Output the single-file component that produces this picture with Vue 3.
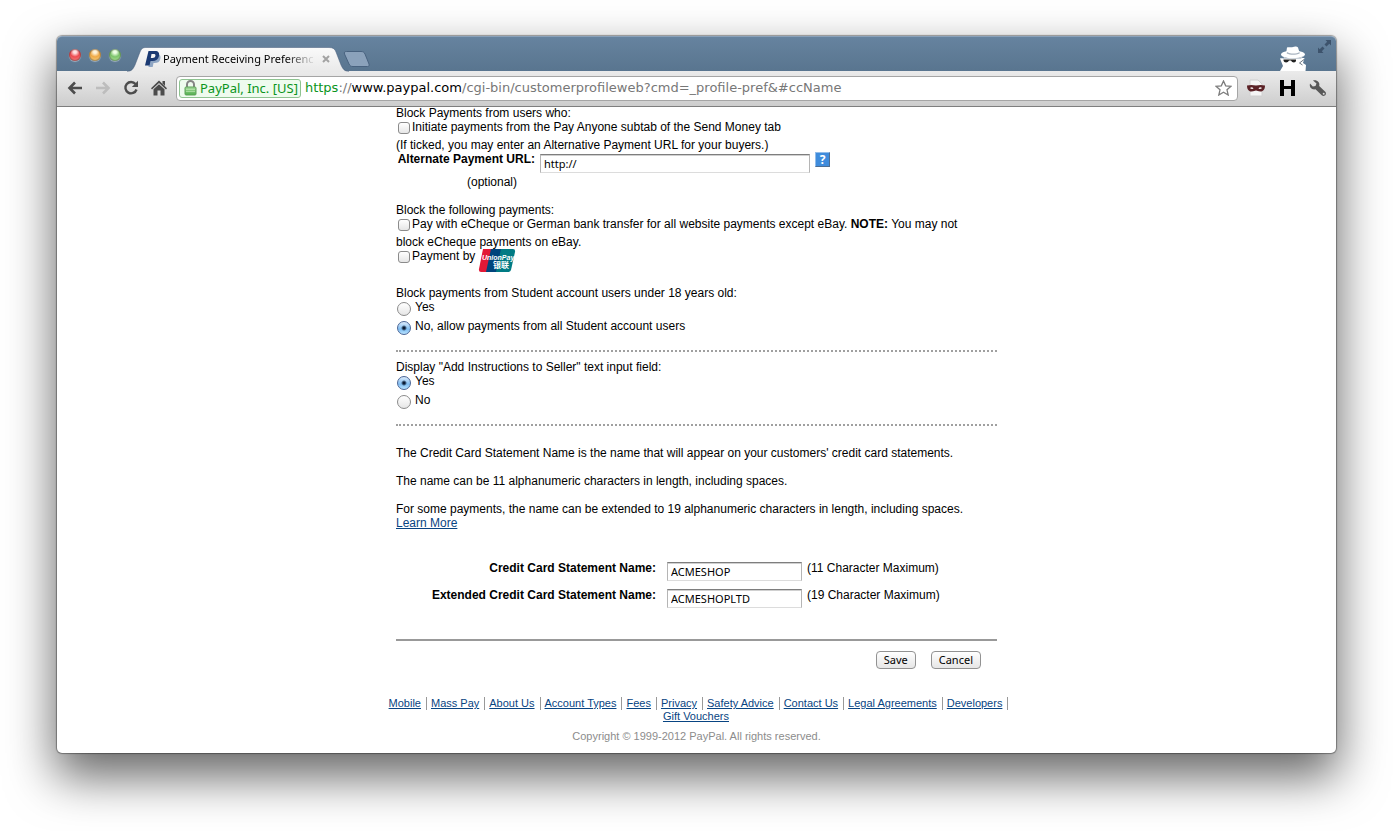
<template>
  <div class="desktop">
    <div class="window">
      <header class="titlebar">
        <div class="lights">
          <button class="light red" aria-label="Close window"></button>
          <button class="light amber" aria-label="Minimise window"></button>
          <button class="light green" aria-label="Zoom window"></button>
        </div>

        <div class="tab">
          <svg class="tab-shape" width="222" height="25" viewBox="0 0 222 25" aria-hidden="true">
            <defs>
              <linearGradient id="tabFill" x1="0" y1="0" x2="0" y2="1">
                <stop offset="0" stop-color="#fafafa" />
                <stop offset="1" stop-color="#e9e9e9" />
              </linearGradient>
            </defs>
            <path d="M0 25C5 24 6 22 8 18L13 5C14.500 1.500 16 .5 19 .5H202C206 .5 208 2 209 5L214 18C216 22 217 24 222 25Z" fill="url(#tabFill)" />
            <path d="M0 24.500C5 24 6 22 8 18L13 5C14.500 1.500 16 .5 19 .5H202C206 .5 208 2 209 5L214 18C216 22 217 24 222 24.500" fill="none" stroke="#43597a" stroke-opacity=".5" />
          </svg>
          <svg class="favicon" width="16" height="16" viewBox="0 0 16 16" aria-hidden="true">
            <path d="M5 3H12C15 3 16 5.500 15.300 8C14.600 11 12.500 12 9.500 12H8.500L7.700 16H3.500Z" fill="#8fa6c4" />
            <path d="M3.500 0H10C13.500 0 14.700 2 14 5C13.300 8.500 11 10 7.500 10H5.500L4.500 14.500H0Z" fill="#1b3a73" />
            <path d="M6.500 3L5.800 7H7.500C9.300 7 10.100 6.200 10.400 4.800C10.700 3.500 10 3 8.500 3Z" fill="#f4f4f4" />
          </svg>
          <span class="tab-title">Payment Receiving Preferenc</span>
          <button class="tab-close" aria-label="Close tab">
            <svg width="8" height="8" viewBox="0 0 8 8"><path d="M1 1L7 7M7 1L1 7" stroke="#a3a3a3" stroke-width="2" /></svg>
          </button>
        </div>

        <button class="new-tab" aria-label="New tab">
          <svg width="28" height="17" viewBox="0 0 28 17">
            <path d="M3.500 .5H18C20 .5 21 1 22 3L26 13C26.500 14.500 26 15.500 24.500 15.500H10C8 15.500 7 15 6 13L1.500 3C1 1.500 1.500 .5 3.500 .5Z" fill="#8ba2bb" stroke="#48627f" />
          </svg>
        </button>

        <svg class="incognito" width="28" height="25" viewBox="0 0 28 25" aria-hidden="true">
          <path d="M1 25L4 20L1 12.500C3 12 5 13 7 12H20L25.500 12L24 17L27 19L26.500 25Z" fill="#fff" />
          <ellipse cx="14" cy="8.500" rx="12" ry="4" fill="#fff" />
          <path d="M7 8L8 1.500C10 .5 12 2 14 1C16 0 18 .5 19 1.500L21 8Z" fill="#fff" />
          <path d="M8 6C12 8 17 8 20.500 6L20.700 7.500C17 9.300 11 9.300 7.700 7.500Z" fill="#a9b4c0" />
          <path d="M4 10.500C9 13 20 13 25 9.500L22 13H6Z" fill="#c9d0d8" />
          <path d="M4.500 13.500H17V14.500C17 17 13 17 12 14.500H10C9 17 5 17 4.500 14.500Z" fill="#222" />
          <path d="M25 13.500L20.500 17L23.500 19" fill="none" stroke="#6a747f" />
        </svg>
        <button class="fullscreen" aria-label="Full screen">
          <svg width="15" height="15" viewBox="0 0 15 15" fill="#3d536c">
            <path d="M8.500 1H14V6.500L12.300 4.800L9.500 7.500L7.500 5.500L10.200 2.700Z" />
            <path d="M6.500 14H1V8.500L2.700 10.200L5.500 7.500L7.500 9.500L4.800 12.300Z" />
          </svg>
        </button>
      </header>

      <nav class="toolbar" aria-label="Browser">
        <button class="tool" aria-label="Back">
          <svg width="16" height="16" viewBox="0 0 16 16"><path d="M15 8H3M8 2.500L2.500 8L8 13.500" fill="none" stroke="#4c4c4c" stroke-width="2.600" /></svg>
        </button>
        <button class="tool" aria-label="Forward" disabled>
          <svg width="16" height="16" viewBox="0 0 16 16"><path d="M1 8H13M8 2.500L13.500 8L8 13.500" fill="none" stroke="#bdbdbd" stroke-width="2.600" /></svg>
        </button>
        <button class="tool" aria-label="Reload">
          <svg width="16" height="16" viewBox="0 0 16 16">
            <path d="M12.500 4A5.700 5.700 0 1 0 13.500 9.500" fill="none" stroke="#4c4c4c" stroke-width="2.400" />
            <path d="M15 .8V7H8.800Z" fill="#4c4c4c" />
          </svg>
        </button>
        <button class="tool" aria-label="Home">
          <svg width="16" height="16" viewBox="0 0 16 16" fill="#4c4c4c">
            <path d="M8 .5L16 8.300L15 9.500L8 3L1 9.500L0 8.300Z" />
            <path d="M11.500 1H14V6L11.500 3.500Z" />
            <path d="M8 4.200L13.500 9.300V15.500H9.500V10.500H6.500V15.500H2.500V9.300Z" />
          </svg>
        </button>

        <div class="omnibox">
          <button class="identity">
            <svg width="13" height="16" viewBox="0 0 13 16" aria-hidden="true">
              <defs>
                <linearGradient id="lockFill" x1="0" y1="0" x2="0" y2="1">
                  <stop offset="0" stop-color="#a9dd9f" />
                  <stop offset="1" stop-color="#4fae4c" />
                </linearGradient>
              </defs>
              <path d="M3 8V4.500A3.500 3.500 0 0 1 10 4.500V8" fill="none" stroke="#858585" stroke-width="2" />
              <rect x="1" y="7" width="11" height="8" rx="1" fill="url(#lockFill)" stroke="#5da358" />
              <path d="M2 9.500H11M2 11.500H11" stroke="#c4ecbb" stroke-opacity=".6" />
            </svg>
            <span>PayPal, Inc. [US]</span>
          </button>
          <div class="url"><span class="scheme">https</span>://<span class="host">www.paypal.com</span>/cgi-bin/customerprofileweb?cmd=_profile-pref&amp;#ccName</div>
          <button class="star" aria-label="Bookmark this page">
            <svg width="17" height="16" viewBox="0 0 17 16"><path d="M8.500 1L10.700 5.800L16 6.300L12 9.800L13.200 15L8.500 12.300L3.800 15L5 9.800L1 6.300L6.300 5.800Z" fill="#fff" stroke="#7d7d7d" stroke-width="1.300" /></svg>
          </button>
        </div>

        <div class="extensions">
          <button class="tool" aria-label="Mask extension">
            <svg width="18" height="18" viewBox="0 0 18 18">
              <path d="M3 1H11L15 5V17H3Z" fill="#f5f5f5" stroke="#d0d0d0" />
              <path d="M0 6.500C4 5.500 6 6 9 6.500C12 6 14 5.500 18 6.500C18 10 16.500 12.500 13.500 12.500C11 12.500 10.500 11.500 9 11.500C7.500 11.500 7 12.500 4.500 12.500C1.500 12.500 0 10 0 6.500Z" fill="#5b2226" />
              <path d="M3 9Q5 7.500 6.500 9.500Q4.500 10.800 3 9ZM15 9Q13 7.500 11.500 9.500Q13.500 10.800 15 9Z" fill="#f0e9e9" />
            </svg>
          </button>
          <button class="tool" aria-label="History extension">
            <svg width="18" height="18" viewBox="0 0 18 18"><path d="M4 1V17M15 1V17" stroke="#000" stroke-width="4" /><path d="M5 8.500H14" stroke="#000" stroke-width="3" /></svg>
          </button>
          <button class="tool" aria-label="Settings">
            <svg width="18" height="18" viewBox="0 0 18 18"><path d="M4 1.500L7.500 4.500L6.500 7L3.800 7.500L1 4.500C0 8 2.500 11 6.500 10.300L13 16.500C15.500 18 18 15.500 16.500 13L10.200 7C11.300 3.500 8 .5 4 1.500Z" fill="#585858" /><circle cx="14.700" cy="14.800" r="1" fill="#ddd" /></svg>
          </button>
        </div>
      </nav>

      <main class="page">
        <form class="prefs" @submit.prevent>
          <section class="block">
            <p>Block Payments from users who:</p>
            <div class="check-row">
              <input id="payAnyone" v-model="blockPayAnyone" type="checkbox">
              <label for="payAnyone">Initiate payments from the Pay Anyone subtab of the Send Money tab</label>
            </div>
            <p>(If ticked, you may enter an Alternative Payment URL for your buyers.)</p>
            <div class="alt-url">
              <label for="altUrl"><b>Alternate Payment URL:</b><span>(optional)</span></label>
              <input id="altUrl" v-model="altUrl" class="field" type="text">
              <button class="help" type="button" aria-label="Help">?</button>
            </div>
          </section>

          <section class="block">
            <p>Block the following payments:</p>
            <div class="check-row">
              <input id="echeque" v-model="blockEcheque" type="checkbox">
              <label for="echeque">Pay with eCheque or German bank transfer for all website payments except eBay. <b>NOTE:</b> You may not</label>
            </div>
            <p><label for="echeque">block eCheque payments on eBay.</label></p>
            <div class="check-row union">
              <input id="unionPay" v-model="blockUnionPay" type="checkbox">
              <label for="unionPay">Payment by</label>
              <svg width="38" height="24" viewBox="0 0 38 24" role="img" aria-label="UnionPay">
                <path d="M5 0H14L9 23H3Q.5 23 1 20Z" fill="#e21836" />
                <path d="M13 0H24L19 23H8Z" fill="#00447c" />
                <path d="M23 0H35Q37.500 0 37 3L33 21Q32.500 23 30 23H18Z" fill="#007b84" />
                <text x="4" y="11" class="union-latin">UnionPay</text>
                <text x="15" y="19" class="union-cjk">银联</text>
              </svg>
            </div>
          </section>

          <fieldset class="choices">
            <legend>Block payments from Student account users under 18 years old:</legend>
            <div v-for="option in studentOptions" :key="option.value" class="radio-row">
              <input :id="'student-' + option.value" v-model="student" type="radio" name="student" :value="option.value">
              <label :for="'student-' + option.value">{{ option.label }}</label>
            </div>
          </fieldset>

          <div class="ruled">
            <fieldset class="choices">
              <legend>Display "Add Instructions to Seller" text input field:</legend>
              <div v-for="option in instructionOptions" :key="option.value" class="radio-row">
                <input :id="'instr-' + option.value" v-model="instructions" type="radio" name="instructions" :value="option.value">
                <label :for="'instr-' + option.value">{{ option.label }}</label>
              </div>
            </fieldset>
          </div>

          <section class="statement">
            <p>The Credit Card Statement Name is the name that will appear on your customers' credit card statements.</p>
            <p>The name can be 11 alphanumeric characters in length, including spaces.</p>
            <p>For some payments, the name can be extended to 19 alphanumeric characters in length, including spaces.<br><a href="#">Learn More</a></p>
          </section>

          <div class="names">
            <template v-for="row in names" :key="row.id">
              <label :for="row.id">{{ row.label }}</label>
              <input :id="row.id" v-model="row.value" class="field" type="text" :maxlength="row.max">
              <span>({{ row.max }} Character Maximum)</span>
            </template>
          </div>

          <div class="actions">
            <button type="submit">Save</button>
            <button type="button">Cancel</button>
          </div>
        </form>

        <footer class="footer">
          <ul>
            <li v-for="link in links" :key="link"><a href="#">{{ link }}</a></li>
          </ul>
          <p>Copyright © 1999-2012 PayPal. All rights reserved.</p>
        </footer>
      </main>
    </div>
  </div>
</template>

<script setup>
import { ref } from 'vue';

const blockPayAnyone = ref(false);
const blockEcheque = ref(false);
const blockUnionPay = ref(false);
const altUrl = ref('http://');

const student = ref('no');
const studentOptions = [
  { value: 'yes', label: 'Yes' },
  { value: 'no', label: 'No, allow payments from all Student account users' }
];

const instructions = ref('yes');
const instructionOptions = [
  { value: 'yes', label: 'Yes' },
  { value: 'no', label: 'No' }
];

const names = ref([
  { id: 'ccName', label: 'Credit Card Statement Name:', value: 'ACMESHOP', max: 11 },
  { id: 'ccNameExt', label: 'Extended Credit Card Statement Name:', value: 'ACMESHOPLTD', max: 19 }
]);

const links = [
  'Mobile', 'Mass Pay', 'About Us', 'Account Types', 'Fees', 'Privacy',
  'Safety Advice', 'Contact Us', 'Legal Agreements', 'Developers', 'Gift Vouchers'
];
</script>

<style>
body {
  background: #fff;
}
</style>

<style scoped>
.desktop {
  padding: 36px 57px 78px;
  font-family: "Liberation Sans", Arial, sans-serif;
  font-size: 12px;
  line-height: 14px;
  color: #000;
}

.desktop * {
  box-sizing: border-box;
}

p, ul, fieldset {
  margin: 0;
  padding: 0;
  border: 0;
}

legend {
  padding: 0;
}

button {
  font-family: "Noto Sans", sans-serif;
}

a {
  color: #084482;
}

.window {
  border-radius: 5px;
  background: #fff;
  box-shadow: 0 0 1px 1px rgba(0, 0, 0, .35), 0 22px 48px 2px rgba(0, 0, 0, .6);
}

/* Title bar */
.titlebar {
  display: flex;
  align-items: flex-end;
  height: 35px;
  border-top: 1px solid #8aa1b9;
  border-radius: 5px 5px 0 0;
  background: linear-gradient(#66839f, #59758f);
}

.titlebar button, .toolbar button {
  display: flex;
  align-items: center;
  justify-content: center;
  padding: 0;
  border: 0;
  background: none;
}

.lights {
  display: flex;
  gap: 8px;
  align-self: flex-start;
  padding: 12px 0 0 12px;
}

.titlebar .light {
  width: 12px;
  height: 12px;
  border-radius: 50%;
  box-shadow: 0 1px 1px rgba(255, 255, 255, .4), inset 0 0 1px 1px rgba(0, 0, 0, .3);
}

.titlebar .red {
  background: radial-gradient(circle at 50% 25%, #ffe3e3 0 12%, #ee4b50 45%, #ff9a94);
}

.titlebar .amber {
  background: radial-gradient(circle at 50% 25%, #fff3da 0 12%, #f0a945 45%, #ffe39a);
}

.titlebar .green {
  background: radial-gradient(circle at 50% 25%, #efffe6 0 12%, #7cc46b 45%, #c4f3ac);
}

.tab {
  position: relative;
  display: flex;
  align-items: center;
  width: 222px;
  height: 24px;
  margin-left: 6px;
  padding-left: 18px;
}

.tab-shape {
  position: absolute;
  left: 0;
  top: 0;
}

.favicon, .tab-title, .tab-close {
  position: relative;
}

.tab-title {
  width: 153px;
  margin-left: 2px;
  white-space: nowrap;
  font-family: "Noto Sans", sans-serif;
  font-size: 11px;
  line-height: 16px;
  -webkit-mask-image: linear-gradient(90deg, #000 80%, transparent);
  mask-image: linear-gradient(90deg, #000 80%, transparent);
}

.tab-close {
  margin-left: 6px;
}

.new-tab {
  margin: 0 auto 3px -6px;
}

.incognito {
  margin-right: 10px;
}

.fullscreen {
  align-self: flex-start;
  margin: 2px 4px 0 0;
}

/* Toolbar */
.toolbar {
  display: flex;
  align-items: center;
  gap: 12px;
  height: 36px;
  padding: 0 9px 1px 10px;
  border-bottom: 1px solid #7e7e7e;
  background: linear-gradient(#ebebeb, #cdcdcd);
}

.omnibox {
  display: flex;
  flex: 1;
  align-items: center;
  height: 25px;
  margin-left: -3px;
  padding: 0 5px 0 2px;
  border: 1px solid #a5a5a5;
  border-radius: 4px;
  background: #fff;
  font-family: "DejaVu Sans", sans-serif;
  font-size: 13px;
  line-height: 18px;
}

.omnibox .identity {
  gap: 3px;
  height: 19px;
  padding: 0 2px 0 4px;
  border: 1px solid #8fc391;
  border-radius: 3px;
  background: #eefbee;
  color: #0a9420;
  font-size: 13px;
  white-space: nowrap;
}

.url {
  flex: 1;
  min-width: 0;
  margin-left: 4px;
  overflow: hidden;
  white-space: nowrap;
  color: #777;
}

.scheme {
  color: #0a9420;
}

.host {
  color: #000;
}

.extensions {
  display: flex;
  gap: 13px;
  margin-left: -3px;
}

/* Page */
.prefs {
  width: 601px;
  margin: -1px auto 0;
}

.block {
  padding-bottom: 14px;
}

.check-row {
  display: flex;
  height: 18px;
  white-space: nowrap;
}

.check-row input {
  appearance: none;
  flex: none;
  width: 12px;
  height: 12px;
  margin: 2px 2px 0 2px;
  border: 1px solid #8b8b8b;
  border-radius: 3px;
  background: linear-gradient(#fff, #e6e6e6);
}

.union {
  height: 23px;
}

.union svg {
  margin-left: 3px;
}

.union-latin {
  fill: #fff;
  font: italic bold 7px "Liberation Sans", sans-serif;
}

.union-cjk {
  fill: #fff;
  font: bold 8px "Noto Sans CJK SC", sans-serif;
}

.alt-url {
  display: flex;
  height: 37px;
}

.alt-url label {
  display: flex;
  flex-direction: column;
  justify-content: space-between;
  align-items: flex-end;
  width: 139px;
}

.alt-url label span {
  padding-right: 18px;
}

.field {
  width: 135px;
  height: 19px;
  padding: 0 3px;
  border: 1px solid #b5b5b5;
  border-top-color: #7e7e7e;
  border-bottom-color: #dcdcdc;
  border-radius: 0;
  background: #fff;
  box-shadow: inset 0 1px #d0d0d0;
  color: #000;
  font-family: "Noto Sans", sans-serif;
  font-size: 11px;
}

.alt-url .field {
  width: 270px;
  margin: 2px 5px 0 5px;
}

.help {
  width: 15px;
  height: 15px;
  padding: 0;
  border: 1px solid #93bdea;
  border-right-color: #4d6d92;
  border-bottom-color: #4d6d92;
  background: #3f8cdc;
  color: #fff;
  font-size: 12px;
  font-weight: bold;
  line-height: 12px;
}

.choices {
  padding-bottom: 12px;
}

.radio-row {
  display: flex;
  height: 19px;
}

.radio-row input {
  appearance: none;
  width: 14px;
  height: 14px;
  margin: 2px 4px 0 1px;
  border: 1px solid #8b8b8b;
  border-radius: 50%;
  background: linear-gradient(#fff, #e6e6e6);
}

.radio-row input:checked {
  border-color: #4a6596;
  background: radial-gradient(circle, #0b1b33 0 1px, transparent 3px), linear-gradient(#dcebfb, #7fbdf2 60%, #b9e4ff);
}

.ruled {
  padding-top: 8px;
  border-top: 2px dotted #a0a0a0;
  border-bottom: 2px dotted #a0a0a0;
}

.statement p {
  padding-bottom: 14px;
}

.statement {
  padding-top: 20px;
}

.names {
  display: grid;
  grid-template-columns: 271px 135px 1fr;
  row-gap: 7px;
  padding: 17px 0 31px;
  border-bottom: 2px solid #999;
}

.names label {
  padding-right: 11px;
  font-weight: bold;
  text-align: right;
}

.names span {
  padding-left: 5px;
}

.names .field {
  margin-top: 1px;
}

.actions {
  display: flex;
  justify-content: flex-end;
  gap: 15px;
  padding: 10px 16px 0 0;
}

.actions button {
  height: 18px;
  padding: 0 7px;
  border: 1px solid #929292;
  border-radius: 4px;
  background: linear-gradient(#fff, #f2f2f2 50%, #e6e6e6);
  color: #000;
  font-size: 11px;
  line-height: 14px;
}

.footer {
  width: 630px;
  margin: 28px auto 0;
  padding-bottom: 10px;
  font-size: 11px;
  line-height: 13px;
  text-align: center;
}

.footer ul {
  display: flex;
  flex-wrap: wrap;
  justify-content: center;
  list-style: none;
}

.footer li {
  padding: 0 5px 0 4px;
  border-right: 1px solid #999;
}

.footer li:last-child {
  border-right: 0;
}

.footer p {
  padding-top: 7px;
  color: #8c8c8c;
}
</style>
